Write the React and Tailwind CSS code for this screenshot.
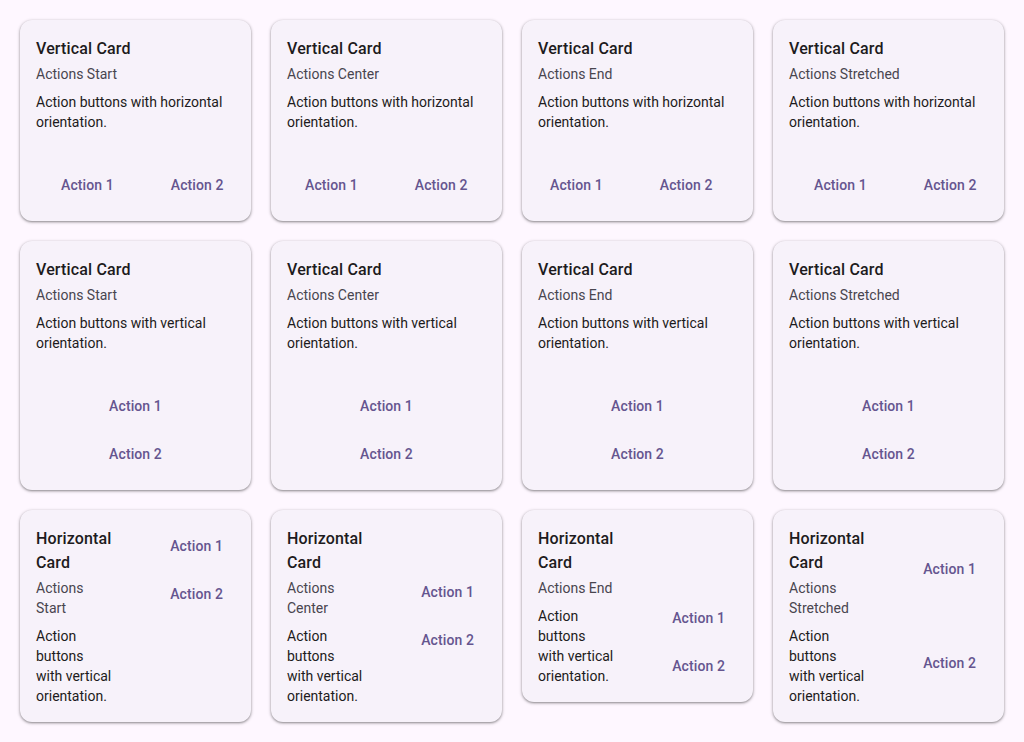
const font = { fontFamily: 'Roboto, "Noto Sans", sans-serif' }

function ActionButton({ children, className = '' }) {
  return (
    <button className={`h-10 px-3 shrink-0 whitespace-nowrap rounded-full text-sm font-medium tracking-[0.1px] text-[#65558f] flex items-center justify-center ${className}`}>
      {children}
    </button>
  )
}

function Heading({ title, subtitle }) {
  return (
    <>
      <div className="text-base font-medium leading-6 tracking-[0.15px] text-[#1d1b20]">{title}</div>
      <div className="mt-[3px] text-sm leading-5 text-[#49454f]">{subtitle}</div>
    </>
  )
}

const cardClass = 'rounded-xl bg-[#f7f2fa] shadow-[0_1px_2px_rgba(0,0,0,0.3),0_1px_3px_1px_rgba(0,0,0,0.15)]'

// first row: side by side buttons
function HorizontalActionsCard({ subtitle, offset }) {
  return (
    <div className={`${cardClass} px-4 pt-[17px] pb-4 flex flex-col`}>
      <Heading title="Vertical Card" subtitle={subtitle} />
      <p className="mt-2 text-sm leading-5 text-[#1d1b20]">Action buttons with horizontal orientation.</p>
      <div className={`mt-[33px] flex gap-[33px] ${offset}`}>
        <ActionButton>Action 1</ActionButton>
        <ActionButton>Action 2</ActionButton>
      </div>
    </div>
  )
}

// second row: stacked buttons
function VerticalActionsCard({ subtitle }) {
  return (
    <div className={`${cardClass} px-4 pt-[17px] pb-4 flex flex-col`}>
      <Heading title="Vertical Card" subtitle={subtitle} />
      <p className="mt-2 text-sm leading-5 text-[#1d1b20]">Action buttons with vertical orientation.</p>
      <div className="mt-[33px] flex flex-col items-center gap-2">
        <ActionButton>Action 1</ActionButton>
        <ActionButton>Action 2</ActionButton>
      </div>
    </div>
  )
}

// third row: text left, actions right
function SideCard({ subtitle, justify }) {
  const stretched = justify === 'stretch'
  return (
    <div className={`${cardClass} px-4 pt-[17px] pb-4 flex gap-2`}>
      <div className="w-[76px] shrink-0">
        <Heading title="Horizontal Card" subtitle={subtitle} />
        <p className="mt-2 text-sm leading-5 text-[#1d1b20]">Action buttons with vertical orientation.</p>
      </div>
      <div className={`flex-1 -mt-px flex flex-col items-end gap-2 ${justify}`}>
        <ActionButton className={stretched ? 'flex-1' : ''}>Action 1</ActionButton>
        <ActionButton className={stretched ? 'flex-1' : ''}>Action 2</ActionButton>
      </div>
    </div>
  )
}

export default function App() {
  return (
    <div className="min-h-screen bg-[#fef7ff] p-5" style={font}>
      <div className="grid grid-cols-4 gap-5 items-start">
        <HorizontalActionsCard subtitle="Actions Start" offset="ml-[13px]" />
        <HorizontalActionsCard subtitle="Actions Center" offset="ml-[6px]" />
        <HorizontalActionsCard subtitle="Actions End" offset="ml-0" />
        <HorizontalActionsCard subtitle="Actions Stretched" offset="ml-[13px]" />

        <VerticalActionsCard subtitle="Actions Start" />
        <VerticalActionsCard subtitle="Actions Center" />
        <VerticalActionsCard subtitle="Actions End" />
        <VerticalActionsCard subtitle="Actions Stretched" />

        <SideCard subtitle="Actions Start" justify="justify-start" />
        <SideCard subtitle="Actions Center" justify="justify-center" />
        <SideCard subtitle="Actions End" justify="justify-end" />
        <SideCard subtitle="Actions Stretched" justify="stretch" />
      </div>
    </div>
  )
}
